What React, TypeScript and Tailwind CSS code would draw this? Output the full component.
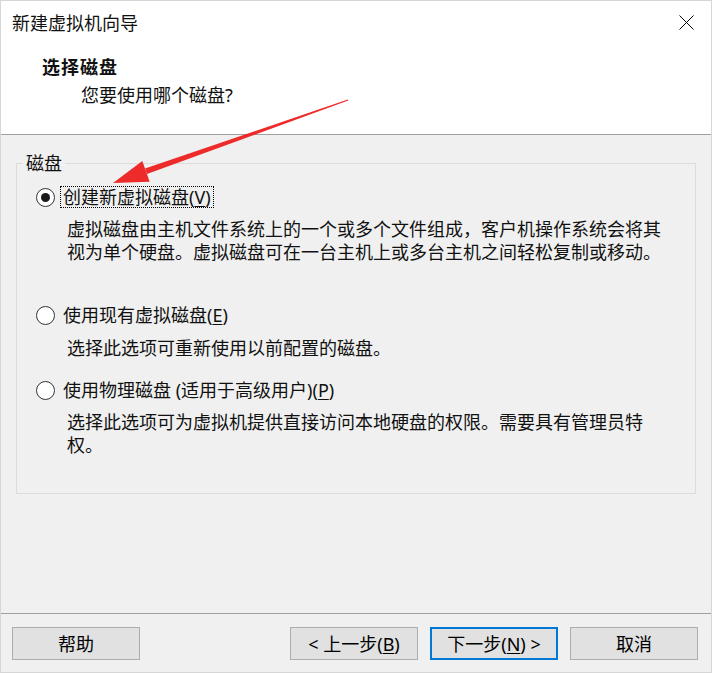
import React from "react"

const font = "font-['Noto_Sans','Noto_Sans_CJK_SC',sans-serif]"

function Radio({ checked }: { checked?: boolean }) {
  return (
    <div className="w-[19px] h-[19px] rounded-full border border-[#333] bg-white flex items-center justify-center shrink-0">
      {checked && <div className="w-[9px] h-[9px] rounded-full bg-[#1a1a1a]" />}
    </div>
  )
}

function Option({
  checked,
  focused,
  label,
  mnemonic,
  className,
}: {
  checked?: boolean
  focused?: boolean
  label: string
  mnemonic: string
  className: string
}) {
  return (
    <div className={`flex items-center h-[24px] ml-[19px] gap-[5px] ${className}`}>
      <Radio checked={checked} />
      <span
        className={`px-[2px] leading-[20px] border border-dotted ${focused ? "border-black" : "border-transparent"}`}
      >
        {label}(<span className="underline underline-offset-2">{mnemonic}</span>)
      </span>
    </div>
  )
}

function Button({ children, primary }: { children: React.ReactNode; primary?: boolean }) {
  return (
    <button
      className={`w-[128px] h-[33px] bg-[#e1e1e1] text-[18px] leading-[22px] text-black flex items-center justify-center ${
        primary ? "border-2 border-[#0078d7]" : "border border-[#adadad]"
      }`}
    >
      {children}
    </button>
  )
}

export default function App() {
  return (
    <div
      className={`relative w-[712px] h-[673px] border border-[#d6d6d6] bg-[#f0f0f0] flex flex-col text-[#111] ${font}`}
    >
      {/* header */}
      <div className="h-[133px] bg-white flex flex-col">
        <div className="flex items-start justify-between pt-[10px] pl-[11px] pr-[17px]">
          <span className="text-[18px] leading-[24px]">新建虚拟机向导</span>
          <svg width="15" height="15" viewBox="0 0 15 15" className="mt-[4px]">
            <path d="M0.5 0.5 L14.5 14.5 M14.5 0.5 L0.5 14.5" stroke="#000" strokeWidth="1" fill="none" />
          </svg>
        </div>
        <div className="mt-[20px] pl-[41px] text-[18px] leading-[24px] font-bold tracking-[1px]">选择磁盘</div>
        <div className="mt-[4px] pl-[80px] text-[18px] leading-[24px]">您要使用哪个磁盘?</div>
      </div>
      <div className="h-px bg-[#a0a0a0]" />

      {/* body */}
      <div className="flex-1 px-[15px]">
        <fieldset className="mt-[17px] h-[342px] border border-[#dcdcdc] text-[18px]">
          <legend className="ml-[6px] px-[3px] leading-[22px]">磁盘</legend>
          <Option checked focused label="创建新虚拟磁盘" mnemonic="V" className="mt-[11px]" />
          <p className="mt-[9px] ml-[50px] w-[600px] leading-[23px]">
            虚拟磁盘由主机文件系统上的一个或多个文件组成，客户机操作系统会将其视为单个硬盘。虚拟磁盘可在一台主机上或多台主机之间轻松复制或移动。
          </p>
          <Option label="使用现有虚拟磁盘" mnemonic="E" className="mt-[39px]" />
          <p className="mt-[10px] ml-[50px] w-[600px] leading-[23px]">选择此选项可重新使用以前配置的磁盘。</p>
          <Option label="使用物理磁盘 (适用于高级用户)" mnemonic="P" className="mt-[18px]" />
          <p className="mt-[9px] ml-[50px] w-[600px] leading-[23px]">
            选择此选项可为虚拟机提供直接访问本地硬盘的权限。需要具有管理员特权。
          </p>
        </fieldset>
      </div>
      <div className="h-px bg-[#a0a0a0]" />

      {/* footer */}
      <div className="flex pt-[13px] pb-[12px] pl-[11px] pr-[13px]">
        <Button>帮助</Button>
        <div className="flex-1" />
        <div className="flex gap-[12px]">
          <Button>
            &lt; 上一步(<span className="underline underline-offset-2">B</span>)
          </Button>
          <Button primary>
            下一步(<span className="underline underline-offset-2">N</span>) &gt;
          </Button>
          <Button>取消</Button>
        </div>
      </div>

      {/* annotation arrow */}
      <svg className="absolute left-0 top-0 pointer-events-none" width="712" height="673">
        <polygon points="347.2,99.5 346.8,98.5 144,167.5 146,173.1" fill="#ee2b2b" />
        <polygon points="112,182 148.7,180.7 141.3,159.9" fill="#ee2b2b" />
      </svg>
    </div>
  )
}
